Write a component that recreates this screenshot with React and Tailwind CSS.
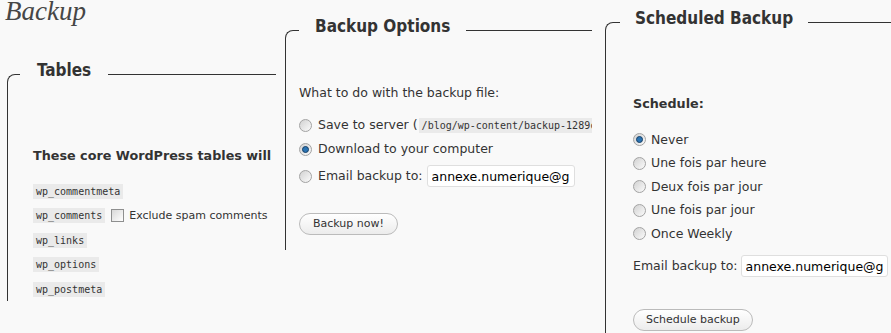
import React from "react";

const body = "font-['DejaVu_Sans',sans-serif]";
const mono = "font-['DejaVu_Sans_Mono',monospace]";

function Radio({ checked }) {
  return (
    <span className="flex-none w-[13px] h-[13px] rounded-full border border-[#a3a3a3] bg-gradient-to-br from-[#d2d2d2] to-[#fbfbfb] flex items-center justify-center">
      {checked && (
        <span className="w-[7px] h-[7px] rounded-full bg-[#2b74b3] border border-[#173f66]" />
      )}
    </span>
  );
}

function Legend({ children, className }) {
  return (
    <div
      className={`-mt-[15px] w-fit h-[20px] leading-[20px] bg-[#f9f9f9] text-[17px] font-bold text-[#333] font-['DejaVu_Sans_Condensed','DejaVu_Sans',sans-serif] font-stretch-condensed ${className}`}
    >
      {children}
    </div>
  );
}

function Button({ children, className }) {
  return (
    <button className={`h-[22px] rounded-full border border-[#bbb] bg-gradient-to-b from-white to-[#ececec] text-[11px] text-[#333] leading-[20px] ${className}`}>
      {children}
    </button>
  );
}

function Code({ children, className = "" }) {
  return (
    <code className={`inline-block bg-[#eaeaea] px-[3px] leading-[15px] text-[10px] text-[#333] ${mono} ${className}`}>
      {children}
    </code>
  );
}

export default function App() {
  const tables = ["wp_commentmeta", "wp_comments", "wp_links", "wp_options", "wp_postmeta"];
  const schedules = ["Never", "Une fois par heure", "Deux fois par jour", "Une fois par jour", "Once Weekly"];

  return (
    <div className={`w-[891px] h-[333px] overflow-hidden bg-[#f9f9f9] text-[#333] ${body}`}>
      {/* Title */}
      <div className="h-[30px] pl-[5px] leading-[30px] -mt-[4px] text-[27px] italic text-[#464646] font-['Liberation_Serif',serif]">
        Backup
      </div>

      <div className="flex items-start pl-[7px] -mt-[4px]">
        {/* Tables */}
        <div className="flex-none w-[269px] h-[227px] mt-[52px] border-l border-t border-[#333] rounded-tl-[8px]">
          <Legend className="ml-[12px] px-[17px]">Tables</Legend>
          <div className="overflow-hidden pl-[25px]">
            <div className="mt-[68px] h-[16px] leading-[16px] text-[12.75px] font-bold whitespace-nowrap">
              These core WordPress tables will be backed up:
            </div>
            <div className="mt-[15px]">
              {tables.map((t) => (
                <div key={t} className="h-[24.5px] flex items-center whitespace-nowrap">
                  <Code>{t}</Code>
                  {t === "wp_comments" && (
                    <>
                      <span className="ml-[6px] w-[13px] h-[13px] border border-[#8e8f8f] bg-gradient-to-br from-[#d8d8d8] to-white" />
                      <span className="ml-[5px] text-[11px] leading-[14px]">Exclude spam comments</span>
                    </>
                  )}
                </div>
              ))}
            </div>
          </div>
        </div>

        {/* Backup Options */}
        <div className="flex-none w-[307px] h-[220px] ml-[9px] mt-[8px] border-l border-t border-[#333] rounded-tl-[8px]">
          <Legend className="ml-[13px] px-[16px]">Backup Options</Legend>
          <div className="overflow-hidden pl-[13px] text-[12.5px] leading-[16px]">
            <div className="mt-[49px] h-[16px]">What to do with the backup file:</div>
            <div className="mt-[12px] h-[24px] flex items-center whitespace-nowrap">
              <Radio />
              <span className="ml-[6px]">Save to server (</span>
              <Code className="ml-[1px]">/blog/wp-content/backup-1289c4e8b7a3</Code>
              <span>)</span>
            </div>
            <div className="h-[24px] flex items-center gap-[6px]">
              <Radio checked />
              <span>Download to your computer</span>
            </div>
            <div className="mt-[3px] h-[24px] flex items-center gap-[6px] whitespace-nowrap">
              <Radio />
              <span>Email backup to:</span>
              <input
                defaultValue="annexe.numerique@gmail.com"
                className="-ml-[2px] w-[148px] h-[22px] px-[4px] border border-[#dfdfdf] rounded-[3px] bg-white text-[12.5px] text-black outline-none"
              />
            </div>
            <div className="mt-[25px]">
              <Button className="px-[13px]">Backup now!</Button>
            </div>
          </div>
        </div>

        {/* Scheduled Backup */}
        <div className="flex-none w-[300px] h-[330px] ml-[13px] border-l border-t border-[#333] rounded-tl-[8px]">
          <Legend className="ml-[14px] px-[15px]">Scheduled Backup</Legend>
          <div className="overflow-hidden pl-[27px] text-[12.5px] leading-[16px]">
            <div className="mt-[68px] h-[16px] text-[12.75px] font-bold">Schedule:</div>
            <div className="mt-[16px]">
              {schedules.map((s, i) => (
                <div key={s} className="h-[23.5px] flex items-center gap-[5px]">
                  <Radio checked={i === 0} />
                  <span>{s}</span>
                </div>
              ))}
            </div>
            <div className="mt-[9.5px] h-[22px] flex items-center gap-[3px] whitespace-nowrap">
              <span>Email backup to:</span>
              <input
                defaultValue="annexe.numerique@gmail.com"
                className="w-[147px] h-[22px] px-[4px] border border-[#dfdfdf] rounded-[3px] bg-white text-[12.5px] text-black outline-none"
              />
            </div>
            <div className="mt-[32px]">
              <Button className="px-[12px]">Schedule backup</Button>
            </div>
          </div>
        </div>
      </div>
    </div>
  );
}
